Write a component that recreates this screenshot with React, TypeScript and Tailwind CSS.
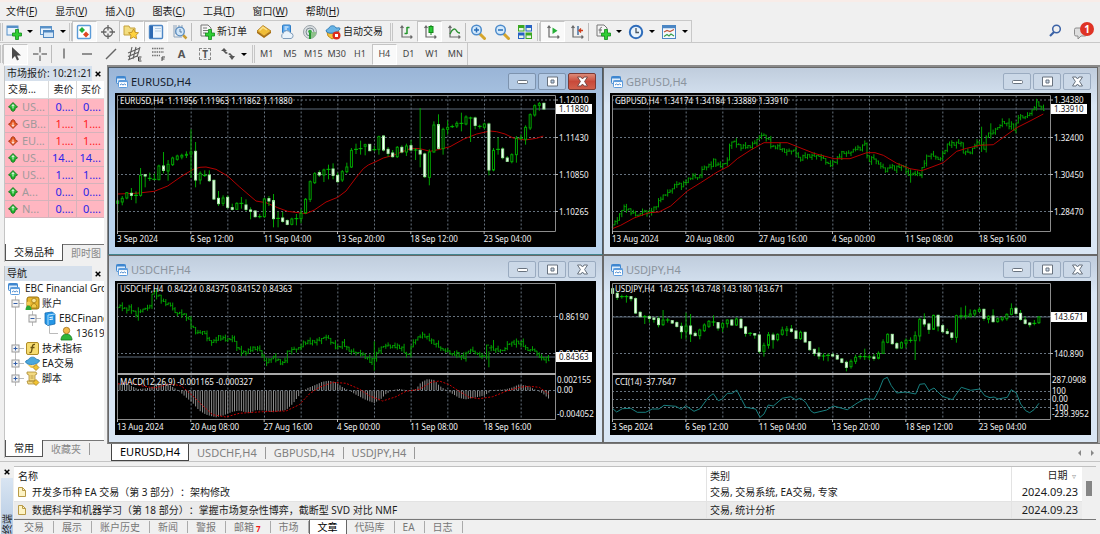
import type { ReactNode } from 'react';

type Point = [number, number];
// [high, open, close, low]
type Candle = [number, number, number, number];

// Chart samples are kept at three units per pixel, measured from the plot origin
const U = 3;
const TOP = 81;
const px = (v: number) => v / U;
const py = (v: number) => (v - TOP) / U;
const round = (v: number) => Math.round(v * 10) / 10;

const eurusdCandles: Candle[] = [
	[400, 412, 405, 440], [390, 408, 397, 418], [378, 396, 380, 400], [366, 382, 388, 402], [376, 388, 388, 412],
	[306, 388, 328, 392], [324, 326, 330, 364], [320, 337, 337, 345], [323, 340, 340, 343], [296, 341, 300, 343],
	[258, 300, 313, 322], [282, 315, 295, 344], [272, 296, 276, 300], [266, 280, 270, 284], [263, 273, 268, 280],
	[256, 268, 265, 276], [190, 264, 258, 336], [228, 256, 342, 364], [316, 342, 322, 355], [313, 328, 328, 333],
	[313, 327, 344, 348], [341, 343, 399, 402], [375, 397, 413, 420], [388, 412, 396, 420], [388, 394, 424, 428],
	[413, 425, 430, 433], [409, 430, 412, 432], [393, 412, 412, 428], [400, 417, 430, 435], [424, 432, 436, 460],
	[433, 435, 452, 455], [444, 452, 452, 457], [395, 452, 399, 455], [390, 398, 405, 420], [384, 404, 458, 484],
	[437, 457, 457, 484], [438, 456, 466, 470], [460, 464, 475, 478], [455, 475, 459, 478], [444, 458, 458, 478],
	[430, 458, 442, 472], [396, 440, 400, 444], [343, 400, 347, 408], [318, 350, 323, 354], [313, 320, 327, 333],
	[308, 327, 312, 348], [296, 310, 310, 340], [292, 309, 328, 340], [320, 328, 347, 350], [312, 342, 317, 348],
	[290, 317, 303, 322], [246, 303, 253, 306], [233, 250, 250, 264], [224, 248, 248, 266], [233, 241, 236, 268],
	[235, 235, 254, 256], [240, 251, 251, 256], [209, 250, 212, 266], [208, 210, 252, 256], [243, 250, 262, 272],
	[252, 261, 272, 275], [240, 272, 244, 276], [238, 244, 258, 262], [233, 258, 240, 270], [222, 239, 252, 256],
	[246, 252, 252, 282], [126, 253, 264, 304], [260, 264, 332, 336], [250, 334, 258, 358], [166, 258, 177, 260],
	[145, 176, 247, 250], [185, 248, 190, 266], [164, 190, 184, 206], [176, 182, 182, 186], [166, 180, 172, 186],
	[140, 172, 172, 196], [148, 174, 153, 178], [152, 156, 156, 228], [152, 156, 178, 190], [176, 181, 181, 188],
	[170, 184, 174, 190], [170, 174, 312, 328], [246, 312, 253, 316], [214, 250, 250, 266], [244, 249, 275, 280],
	[270, 276, 286, 288], [262, 287, 266, 292], [210, 266, 217, 290], [205, 216, 216, 222], [178, 220, 184, 236],
	[142, 186, 146, 192], [115, 147, 119, 152], [108, 118, 113, 134], [110, 112, 129, 131],
];

const usdjpyCandles: Candle[] = [
	[98, 104, 118, 118], [114, 118, 130, 138], [122, 128, 128, 134], [123, 128, 128, 146], [126, 128, 134, 142],
	[130, 134, 177, 180], [172, 175, 188, 190], [183, 188, 188, 210], [183, 188, 193, 206], [190, 192, 196, 206],
	[188, 194, 212, 220], [168, 212, 198, 216], [192, 198, 198, 206], [198, 200, 207, 210], [202, 206, 217, 221],
	[206, 217, 233, 254], [176, 232, 216, 256], [180, 216, 240, 264], [232, 238, 245, 246], [224, 245, 228, 256],
	[208, 230, 213, 234], [198, 217, 202, 222], [184, 204, 204, 216], [204, 206, 222, 230], [204, 220, 209, 234],
	[196, 209, 198, 221], [196, 198, 213, 216], [190, 213, 195, 216], [192, 196, 221, 224], [216, 219, 238, 248],
	[234, 238, 238, 246], [237, 239, 243, 254], [240, 243, 292, 298], [266, 292, 274, 308], [234, 274, 242, 284],
	[236, 243, 257, 284], [238, 257, 241, 262], [218, 241, 228, 245], [216, 230, 225, 246], [213, 225, 232, 236],
	[228, 231, 253, 256], [230, 254, 235, 258], [233, 235, 264, 266], [261, 263, 287, 290], [284, 286, 298, 306],
	[280, 297, 306, 316], [298, 306, 306, 320], [298, 304, 304, 322], [298, 302, 306, 308], [302, 304, 315, 318],
	[312, 315, 325, 328], [320, 325, 340, 352], [316, 338, 322, 344], [302, 322, 310, 330], [300, 308, 308, 316],
	[284, 308, 308, 318], [302, 309, 309, 318], [300, 309, 313, 320], [292, 313, 298, 316], [256, 298, 264, 300],
	[238, 265, 241, 268], [240, 241, 269, 272], [264, 269, 282, 286], [262, 282, 266, 284], [253, 268, 259, 282],
	[250, 259, 259, 266], [232, 260, 245, 318], [192, 246, 196, 262], [178, 197, 210, 218], [206, 210, 226, 240],
	[182, 226, 184, 228], [182, 184, 216, 232], [212, 215, 233, 236], [224, 233, 238, 242], [236, 237, 250, 258],
	[182, 250, 185, 266], [160, 186, 186, 196], [155, 186, 186, 196], [166, 187, 180, 190], [166, 180, 170, 188],
	[160, 172, 166, 175], [164, 166, 193, 200], [184, 196, 187, 208], [166, 186, 203, 206], [190, 203, 194, 206],
	[188, 197, 191, 202], [178, 194, 181, 200], [148, 181, 164, 184], [158, 163, 178, 182], [168, 178, 196, 200],
	[188, 198, 208, 212], [204, 207, 212, 220], [198, 208, 208, 214], [186, 206, 189, 210],
];

const eurusdAverage: Point[] = [
	[8, 384], [63, 382], [118, 376], [158, 360], [201, 330], [235, 310], [255, 304], [273, 303], [303, 310], [338, 330],
	[373, 362], [423, 405], [453, 410], [488, 425], [518, 436], [573, 443], [598, 432], [633, 408], [668, 394], [693, 375],
	[723, 335], [745, 308], [760, 297], [780, 288], [805, 276], [835, 268], [870, 254], [888, 247], [915, 248], [945, 256],
	[975, 250], [1005, 242], [1045, 220], [1085, 204], [1125, 195], [1145, 197], [1170, 204], [1195, 216], [1230, 222],
	[1265, 217], [1285, 210],
];

const gbpusdTrend: Point[] = [
	[7, 485], [17, 470], [32, 455], [44, 428], [60, 430], [77, 440], [92, 450], [107, 437], [117, 440], [132, 432],
	[147, 418], [162, 395], [177, 380], [192, 368], [204, 355], [222, 360], [237, 340], [252, 332], [272, 340], [284, 305],
	[297, 298], [312, 300], [318, 285], [327, 300], [342, 295], [360, 282], [367, 230], [382, 230], [397, 240], [412, 240],
	[424, 247], [437, 235], [447, 220], [457, 203], [469, 210], [482, 225], [492, 245], [507, 238], [522, 250], [532, 262],
	[547, 255], [562, 250], [574, 282], [587, 275], [602, 270], [622, 266], [637, 275], [652, 285], [662, 295], [677, 288],
	[694, 275], [702, 262], [720, 260], [740, 250], [760, 250], [772, 225], [780, 285], [795, 275], [810, 295], [820, 300],
	[835, 312], [848, 300], [860, 312], [875, 300], [888, 298], [900, 330], [920, 325], [938, 322], [948, 290], [960, 270],
	[980, 270], [995, 280], [1010, 255], [1020, 238], [1040, 232], [1058, 225], [1067, 262], [1090, 260], [1098, 235],
	[1110, 228], [1120, 240], [1130, 250], [1140, 195], [1150, 205], [1160, 190], [1175, 182], [1185, 170], [1200, 175],
	[1215, 175], [1220, 195], [1230, 155], [1250, 155], [1265, 140], [1275, 130], [1288, 112], [1300, 128],
];

const gbpusdAverage: Point[] = [
	[7, 488], [32, 478], [72, 456], [117, 440], [147, 438], [182, 420], [232, 375], [272, 350], [322, 318], [357, 300],
	[382, 278], [422, 252], [462, 230], [532, 230], [562, 242], [612, 262], [672, 278], [720, 278], [770, 260], [795, 260],
	[820, 268], [860, 292], [900, 308], [935, 314], [960, 305], [1000, 290], [1040, 256], [1070, 247], [1110, 238],
	[1150, 236], [1180, 214], [1220, 185], [1260, 165], [1300, 144],
];

const usdchfTrend: Point[] = [
	[8, 160], [23, 153], [38, 168], [53, 165], [68, 180], [83, 168], [103, 165], [111, 160], [115, 120], [123, 112],
	[138, 125], [153, 150], [173, 152], [188, 175], [203, 180], [223, 190], [235, 210], [253, 240], [273, 235], [288, 258],
	[303, 262], [318, 252], [333, 255], [361, 252], [373, 285], [388, 295], [403, 290], [418, 285], [443, 288], [453, 315],
	[463, 325], [478, 312], [493, 318], [513, 328], [523, 295], [538, 290], [558, 280], [573, 265], [593, 268], [613, 258],
	[638, 250], [653, 262], [673, 280], [688, 270], [708, 290], [728, 292], [748, 305], [773, 320], [788, 305], [803, 285],
	[823, 272], [848, 278], [868, 285], [885, 305], [898, 270], [913, 255], [933, 240], [945, 250], [963, 270], [983, 282],
	[1003, 290], [1018, 305], [1033, 300], [1053, 308], [1068, 290], [1083, 295], [1098, 300], [1113, 310], [1123, 275],
	[1133, 285], [1148, 285], [1173, 290], [1188, 270], [1213, 262], [1228, 268], [1235, 285], [1248, 290], [1263, 282],
	[1273, 300], [1288, 318], [1301, 315],
];

const macdHistogram: Point[] = [
	[8, 390], [33, 388], [48, 395], [68, 405], [93, 403], [108, 400], [133, 388], [158, 390], [178, 402], [193, 412],
	[213, 430], [233, 447], [253, 470], [273, 482], [303, 490], [323, 485], [353, 473], [373, 470], [403, 478], [423, 468],
	[453, 470], [473, 475], [513, 468], [533, 450], [548, 430], [563, 412], [578, 402], [603, 392], [623, 383], [643, 380],
	[663, 385], [683, 400], [703, 410], [728, 425], [753, 438], [778, 447], [798, 435], [813, 420], [833, 408], [853, 405],
	[883, 410], [903, 405], [918, 385], [938, 375], [958, 378], [973, 395], [993, 408], [1013, 420], [1033, 432],
	[1053, 436], [1083, 430], [1108, 425], [1133, 408], [1163, 407], [1188, 402], [1213, 391], [1238, 396], [1263, 408],
	[1283, 418], [1301, 434],
];

const macdSignal: Point[] = [
	[8, 390], [43, 385], [78, 395], [118, 402], [163, 390], [198, 395], [233, 425], [263, 455], [293, 482], [333, 489],
	[373, 478], [443, 473], [513, 471], [553, 452], [583, 420], [613, 400], [653, 385], [693, 388], [733, 405], [763, 425],
	[803, 441], [843, 428], [873, 412], [913, 406], [948, 385], [973, 381], [1003, 392], [1033, 412], [1063, 430],
	[1093, 434], [1133, 428], [1173, 412], [1213, 400], [1243, 397], [1273, 400], [1301, 420],
];

const cciLine: Point[] = [
	[7, 463], [20, 474], [37, 464], [62, 463], [82, 475], [107, 475], [127, 465], [147, 465], [162, 454], [197, 457],
	[214, 466], [227, 455], [252, 472], [270, 464], [297, 428], [310, 419], [325, 440], [337, 435], [352, 418], [367, 418],
	[380, 408], [407, 460], [437, 465], [450, 490], [462, 480], [475, 453], [490, 456], [517, 433], [542, 428], [557, 437],
	[572, 433], [587, 445], [602, 470], [612, 477], [650, 468], [670, 456], [712, 467], [742, 447], [765, 434], [792, 436],
	[807, 408], [820, 376], [832, 370], [844, 395], [860, 417], [887, 414], [917, 420], [929, 391], [944, 389], [957, 410],
	[972, 402], [997, 427], [1027, 437], [1054, 400], [1082, 409], [1109, 405], [1124, 425], [1140, 431], [1152, 429],
	[1164, 435], [1192, 430], [1204, 407], [1219, 417], [1232, 450], [1247, 470], [1259, 476], [1272, 467], [1287, 448],
];

const septemberDates = ['3 Sep 2024', '6 Sep 12:00', '11 Sep 04:00', '13 Sep 20:00', '18 Sep 12:00', '23 Sep 04:00'];
const augustDates = ['13 Aug 2024', '20 Aug 08:00', '27 Aug 16:00', '4 Sep 00:00', '11 Sep 08:00', '18 Sep 16:00'];

function valueAt(points: Point[], x: number) {
	const i = points.findIndex((p) => p[0] >= x);
	if (i <= 0) return points[i === 0 ? 0 : points.length - 1][1];
	const [x0, y0] = points[i - 1];
	const [x1, y1] = points[i];
	return y0 + ((y1 - y0) * (x - x0)) / (x1 - x0);
}

const linePath = (points: Point[]) => points.map(([x, y], i) => `${i ? 'L' : 'M'}${round(px(x))} ${round(py(y))}`).join('');

function barPath(points: Point[], spikes: Record<number, Point>) {
	const price = (k: number) => valueAt(points, 8 + k * 6.875) + 4 * Math.sin(k * 2.9) + 3 * Math.sin(k * 0.8);
	let d = '';
	for (let k = 0; k < 189; k++) {
		const x = px(8 + k * 6.875);
		const open = price(k);
		const close = price(k + 1);
		let high = Math.min(open, close) - 9 * Math.sin(k * 2.3) ** 4 - 1;
		let low = Math.max(open, close) + 9 * Math.sin(k * 1.7 + 1) ** 4 + 1;
		if (spikes[k]) [high, low] = spikes[k];
		d += `M${round(x)} ${round(py(high))}V${round(py(low))}`;
		d += `M${round(x - 1)} ${round(py(open))}h1M${round(x)} ${round(py(close))}h1`;
	}
	return d;
}

function Candles({ data }: { data: Candle[] }) {
	return (
		<g stroke="#00c400" strokeWidth="1">
			{data.map(([high, open, close, low], k) => {
				const x = px(8 + k * 13.75);
				const bear = close > open;
				const top = py(Math.min(open, close));
				const height = Math.abs(close - open) / U;
				return (
					<g key={k}>
						<path d={`M${x} ${py(high)}V${py(low)}`} stroke="#00a400" />
						{height < 1 ? (
							<path d={`M${x - 2} ${top}h4`} />
						) : (
							<rect
								x={x - 1}
								y={top}
								width="2"
								height={height}
								fill={bear ? '#fff' : '#000'}
								stroke={bear ? '#a4eca4' : '#00a400'}
							/>
						)}
					</g>
				);
			})}
		</g>
	);
}

type ChartProps = {
	label: string;
	summary: string;
	dates: string[];
	rows: { y: number; text: string }[];
	priceY: number;
	price: string;
	indicator?: { text: string; levels: number[]; scale: { y: number; text: string }[] };
	children: ReactNode;
};

function Chart({ label, summary, dates, rows, priceY, price, indicator, children }: ChartProps) {
	return (
		<svg viewBox="0 0 481 154" className="block w-full bg-black font-['Noto_Sans','Open_Sans',sans-serif] text-[8px]" role="img" aria-label={label}>
			<g stroke="#66727e" strokeDasharray="2 2" strokeWidth="1">
				{Array.from({ length: 11 }, (_, i) => (
					<path key={i} d={`M${39.5 + (i * 110) / 3} 2.5V138`} />
				))}
				{rows.map((row) => (
					<path key={row.y} d={`M2 ${row.y}H440`} />
				))}
				{indicator?.levels.map((y) => <path key={y} d={`M2 ${y}H440`} />)}
			</g>
			<path d={`M2 ${priceY}H440`} stroke="#5c6b7a" />
			{children}
			<path d="M2.5 138.5V2.5H440.5V138.5Z" fill="none" stroke="#8c8c8c" />
			{indicator && <path d="M2 93H441" stroke="#a8a8a8" strokeWidth="2" />}
			<path d={dates.map((_, i) => `M${2.5 + (i * 220) / 3} 138v3`).join('')} stroke="#b4b4b4" />
			<path d={rows.map((row) => `M440 ${row.y}h3`).join('')} stroke="#b4b4b4" />
			<g fill="#f2f2f2">
				<text x="5" y="11" className="whitespace-pre">{summary}</text>
				{indicator && <text x="5" y="104">{indicator.text}</text>}
				{dates.map((date, i) => (
					<text key={date} x={2 + (i * 220) / 3} y="149">{date}</text>
				))}
				{rows.map((row) => (
					<text key={row.y} x="444" y={row.y + 3}>{row.text}</text>
				))}
				{indicator?.scale.map((row) => (
					<text key={row.text} x="442" y={row.y + 3}>{row.text}</text>
				))}
			</g>
			<rect x="441" y={priceY - 5} width="36" height="10" fill="#fff" />
			<text x="444" y={priceY + 3} fill="#111">{price}</text>
		</svg>
	);
}

function ChartIcon() {
	return (
		<svg viewBox="0 0 14 14" className="size-3.5 shrink-0">
			<rect x="1.5" y="1.5" width="9" height="7" rx="1" fill="#dcecfb" stroke="#3f86cf" />
			<path d="M1.5 2.5h9" stroke="#3f86cf" strokeWidth="2" />
			<rect x="3.5" y="5.5" width="9" height="7" rx="1" fill="#fff" stroke="#5b9bdc" />
			<path d="M3.5 6.3h9" stroke="#5b9bdc" strokeWidth="1.6" />
			<path d="M5 10l1.5-1 1.5 1 1.5-1 1.5 1" fill="none" stroke="#4a8ad0" />
		</svg>
	);
}

const glyphs: Record<string, ReactNode> = {
	Minimize: <rect x="1.5" y="5.5" width="10" height="3" rx="1" />,
	Maximize: <path d="M1.5 2h10v9h-10zM5 5h3v3H5z" fillRule="evenodd" />,
	Close: <path d="M1.5 2h3.500l1.500 2L8 2h3.500L8.600 6.500l2.900 4.500H8L6.500 9 5 11H1.500l2.900-4.500z" />,
};

function ChartWindow({ title, active = false, children }: { title: string; active?: boolean; children: ReactNode }) {
	return (
		<section
			className={`min-w-0 border px-1.5 pb-[7px] ${
				active
					? 'border-[#4c5862] border-b-[#43858f] bg-linear-to-b from-[#9ab5d7] to-[#b9d3ed] to-40%'
					: 'border-[#686868] bg-linear-to-b from-[#c0cddd] to-[#d9e6f4] to-20%'
			}`}
		>
			<header className="flex h-[25px] items-center gap-0.5 pt-0.5">
				<ChartIcon />
				<h2 className={`flex-1 text-[11px] leading-4 ${active ? 'text-[#15202c]' : 'text-[#8b949e]'}`}>{title}</h2>
				<div className="flex gap-0.5">
					{Object.keys(glyphs).map((name) => {
						const red = active && name === 'Close';
						return (
							<button
								key={name}
								type="button"
								aria-label={name}
								className={`flex h-[17px] w-7 items-center justify-center rounded-xs border ${
									red
										? 'border-[#7c3a35] bg-linear-to-b from-[#dd8a78] via-[#c8493a] to-[#d0604c]'
										: active
											? 'border-[#7d93ae] bg-[#b4cae4]'
											: 'border-[#9aabc0] bg-[#cbd8e7]'
								}`}
							>
								<svg viewBox="0 0 13 13" className="size-[13px]" fill="#fff" stroke={red ? '#7a4844' : '#68727e'}>
									{glyphs[name]}
								</svg>
							</button>
						);
					})}
				</div>
			</header>
			{children}
		</section>
	);
}

const plus = <path d="M9.500 5.500h3v3.500h3v3h-3v3.500h-3V12h-3V9h3z" fill="#2fce34" stroke="#128a1b" strokeWidth=".8" />;
const axes = <path d="M4 2v11h10M2.500 4L4 2l1.500 2M12.500 11.500L14 13l-1.500 1.500" fill="none" stroke="#686868" strokeWidth="1.200" />;
const lens = (
	<>
		<path d="M10 10l4.500 4.500" stroke="#d5a52c" strokeWidth="3" strokeLinecap="round" />
		<circle cx="6.500" cy="6" r="4.800" fill="#d4eafc" stroke="#4d8bcb" strokeWidth="1.500" />
	</>
);

const icons: Record<string, ReactNode> = {
	newChart: (
		<>
			<rect x="1" y="2" width="11" height="9" fill="#e9f3fc" stroke="#5790c8" />
			<path d="M1 3h11" stroke="#5790c8" strokeWidth="2" />
			{plus}
		</>
	),
	profiles: (
		<>
			<rect x="1.500" y="2.500" width="11" height="8" fill="#eaf4fd" stroke="#5a92c8" />
			<path d="M1 3.500h12" stroke="#5a92c8" strokeWidth="2" />
			<rect x="4.500" y="6.500" width="10" height="7" fill="#d5e8f9" stroke="#4f87c0" />
			<path d="M4.500 7.500h10" stroke="#4f87c0" strokeWidth="2" />
		</>
	),
	marketWatch: (
		<>
			<rect x="1.500" y="1.500" width="13" height="13" rx="1" fill="#fff" stroke="#5b9bd8" strokeWidth="1.400" />
			<path d="M6 3l3 3-3 3-3-3z" fill="#21ad39" />
			<path d="M10 7.500l3 3-3 3-3-3z" fill="#e04821" />
		</>
	),
	target: (
		<>
			<circle cx="8" cy="8" r="4.500" fill="none" stroke="#656565" strokeWidth="1.300" />
			<path d="M8 1v5.500M8 9.500V15M1 8h5.500M9.500 8H15" stroke="#656565" strokeWidth="1.300" />
		</>
	),
	favorites: (
		<>
			<path d="M1 2h5l1 2h5v7H1z" fill="#f3dd7f" stroke="#c4a13c" />
			<path d="M10.500 5l1.600 3.300 3.400.5-2.500 2.400.6 3.500-3.100-1.700-3.100 1.700.6-3.500-2.500-2.400 3.400-.5z" fill="#ffd23e" stroke="#b8861c" strokeWidth=".8" />
		</>
	),
	terminal: (
		<>
			<rect x="1.500" y="1.500" width="13" height="13" rx="1" fill="#edf5fd" stroke="#4d86c5" strokeWidth="1.400" />
			<path d="M3.500 2v12" stroke="#2d69b2" strokeWidth="3" />
			<path d="M7 4.500h6M7 7h6" stroke="#b3cbe3" />
		</>
	),
	tester: (
		<>
			<path d="M2 1v12h8M4 1v9M10 1v4M7 1v3" fill="none" stroke="#8ba2ba" />
			<path d="M11 11l3.500 3.500" stroke="#c99d35" strokeWidth="2.500" />
			<circle cx="8" cy="7.500" r="4.300" fill="#cfe5f8" stroke="#5a8cbf" strokeWidth="1.300" />
			<path d="M8 5v3h2" fill="none" stroke="#5a7ca0" />
		</>
	),
	newOrder: (
		<>
			<path d="M2 1h7l3 3v8H2z" fill="#f5f5f5" stroke="#777" />
			<path d="M4 4h4M4 6.500h5M4 9h3" stroke="#777" />
			{plus}
		</>
	),
	book: (
		<>
			<path d="M1 9l7 5 7-5v-2L8 12 1 7z" fill="#a86f12" />
			<path d="M1 7l6-5.500L15 7l-7 5z" fill="#f0bd38" stroke="#a8741a" strokeWidth=".8" />
			<path d="M3.500 6.500L7 3.300l4 2.700" fill="none" stroke="#fbe18c" strokeWidth="1.500" />
		</>
	),
	cloud: (
		<>
			<rect x="3.500" y="1" width="8" height="8" rx="1" fill="#58a6ec" stroke="#2f7cc4" />
			<path d="M5.500 3h4M5.500 5h2.500" stroke="#fff" strokeWidth="1.200" />
			<path d="M4 14.500a3 3 0 010-5 4 4 0 017.500-.5A2.800 2.800 0 0112 14.500z" fill="#eaf3fb" stroke="#7f9cb9" />
		</>
	),
	signal: (
		<>
			<circle cx="8" cy="8" r="6.500" fill="#dadfe2" stroke="#9aa3a8" />
			<circle cx="8" cy="8" r="4" fill="none" stroke="#7d8a92" />
			<path d="M8 8h6.500A6.500 6.500 0 018 14.500z" fill="#8fc08b" />
			<path d="M8 8v7" stroke="#239530" strokeWidth="2" />
			<circle cx="8" cy="7.500" r="1.800" fill="#35a942" />
		</>
	),
	autoTrade: (
		<>
			<path d="M2 8c4 2 8 2 12-1l-2 5-5 3-4-3z" fill="#f4c33d" stroke="#c18c1d" />
			<path d="M1 7c0-2 3-2 3-3 1-3 6-3 7 0 2 0 4-1 4 1-2 4-12 6-14 2z" fill="#68b4e5" stroke="#347fb8" />
			<circle cx="11.500" cy="11.500" r="4" fill="#dd2c1c" />
			<rect x="10" y="10" width="3" height="3" fill="#fff" />
		</>
	),
	bars: (
		<>
			{axes}
			<path d="M9 3v7M9 3.500h2.500M6.500 9.500H9" stroke="#22952a" strokeWidth="1.500" />
		</>
	),
	candle: (
		<>
			{axes}
			<path d="M9 1v10" stroke="#14871b" />
			<rect x="7" y="2.500" width="4" height="6" fill="#28ca35" stroke="#14871b" />
		</>
	),
	line: (
		<>
			{axes}
			<path d="M4 10c2-5 5-6 6-4s2 3 4 3" fill="none" stroke="#2f9136" strokeWidth="1.400" />
		</>
	),
	zoomIn: (
		<>
			{lens}
			<path d="M4 6h5M6.500 3.500v5" stroke="#276cb6" strokeWidth="1.500" />
		</>
	),
	zoomOut: (
		<>
			{lens}
			<path d="M4 6h5" stroke="#276cb6" strokeWidth="1.500" />
		</>
	),
	tile: (
		<>
			<path d="M8.500 1H15v6.500H8.500zM1 8.500h6.500V15H1z" fill="#2561c3" />
			<path d="M1 1h6.500v6.500H1zM8.500 8.500H15V15H8.500z" fill="#3ba822" />
			<path d="M2 4h4.500v2.500H2zM9.500 4H14v2.500H9.500zM2 11.500h4.500V14H2zM9.500 11.500H14V14H9.500z" fill="#eaf5e6" />
		</>
	),
	scroll: (
		<>
			{axes}
			<path d="M7.500 3.500v6.500l5-3.200z" fill="#24ae35" />
		</>
	),
	shift: (
		<>
			{axes}
			<path d="M9 2v9" stroke="#3c6b9d" strokeWidth="1.400" />
			<path d="M14 6.500h-4M12 4.500l-2 2 2 2" fill="none" stroke="#cf3d1b" strokeWidth="1.300" />
		</>
	),
	indicator: (
		<>
			<path d="M2 1h7l3 3v8H2z" fill="#f5f5f5" stroke="#777" />
			<path d="M7 3.500c-2-.5-2 1-2 6M3.500 6H7" fill="none" stroke="#666" />
			{plus}
		</>
	),
	clock: (
		<>
			<circle cx="8" cy="8" r="6.200" fill="#e9f4fd" stroke="#2f6dbb" strokeWidth="2" />
			<path d="M8 4v4.500h3" fill="none" stroke="#4c5863" strokeWidth="1.300" />
		</>
	),
	template: (
		<>
			<rect x="1.500" y="1.500" width="13" height="13" fill="#f4f9fe" stroke="#4b86c4" />
			<path d="M1.500 3h13" stroke="#4b86c4" strokeWidth="2.500" />
			<path d="M3 8l3-1.500 3 1 4-2" fill="none" stroke="#c0553a" strokeWidth="1.200" />
			<path d="M3 12.500l3-2 2 1.500 2-2 3 2" fill="none" stroke="#399d4a" strokeWidth="1.200" />
		</>
	),
	cursor: <path d="M4 1v12l3-3 2 4.500 2-1L9 9.500h4z" fill="#4b4b4b" />,
	cross: <path d="M8 1v5.500M8 9.500V15M1 8h5.500M9.500 8H15" stroke="#777" strokeWidth="1.400" />,
	vline: <path d="M8 2.500v10" stroke="#666" strokeWidth="1.400" />,
	hline: <path d="M3 8h10" stroke="#666" strokeWidth="1.400" />,
	trend: <path d="M3 13L13 3" stroke="#666" strokeWidth="1.400" />,
	channel: (
		<>
			<path d="M1 7l12-5M1 10.500L12 6M1 14l9-4M5 1L2 14M9 1L6 13M13 1l-3 10" stroke="#606060" strokeWidth="1.100" />
			<path d="M14.500 11h-3v4h3M11.500 13H14" fill="none" stroke="#444" />
		</>
	),
	fibo: (
		<>
			<path d="M2 2.500h12M2 6h12M2 9.500h8" stroke="#707070" strokeDasharray="1.500 .8" strokeWidth="1.300" />
			<path d="M12 15v-4h3M12 13h2.500" fill="none" stroke="#444" />
		</>
	),
	arrows: (
		<>
			<path d="M1 5l3-3 3 3H5l3 2-2 1-3-3z" fill="#555" />
			<path d="M15 10l-3 4-3-4h2L8 8l2-1 3 3z" fill="#555" />
		</>
	),
};

function Icon({ name }: { name: string }) {
	return (
		<svg viewBox="0 0 16 16" className="size-4 shrink-0" aria-hidden="true">
			{icons[name]}
		</svg>
	);
}

function ToolButton({ name, pressed = false, children }: { name: string; pressed?: boolean; children?: ReactNode }) {
	return (
		<button
			type="button"
			aria-label={name}
			className={`flex h-[21px] flex-1 items-center justify-center text-[10px] ${
				pressed ? 'border border-[#c4c4c4] border-r-white border-b-white bg-[#f9f9f9]' : ''
			}`}
		>
			{children ?? <Icon name={name} />}
		</button>
	);
}

function MenuButton({ name }: { name: string }) {
	return (
		<button type="button" aria-label={name} className="flex h-[21px] w-[33px] items-center gap-1 pl-[3px]">
			<Icon name={name} />
			<span className="ml-px border-x-3 border-t-3 border-x-transparent border-t-black" />
		</button>
	);
}

function TextButton({ name, text, className }: { name: string; text: string; className: string }) {
	return (
		<button type="button" className={`flex h-[21px] items-center gap-0.5 pl-[3px] text-[10px] whitespace-nowrap ${className}`}>
			<Icon name={name} />
			{text}
		</button>
	);
}

const Grip = () => <span className="h-[18px] w-[3px] shrink-0 border-x border-[#c6c6c6]" />;
const Divider = () => <span className="h-[18px] w-px shrink-0 bg-[#bcbcbc]" />;

const menus = [
	['文件', 'F'], ['显示', 'V'], ['插入', 'I'], ['图表', 'C'], ['工具', 'T'], ['窗口', 'W'], ['帮助', 'H'],
];

function Toolbars() {
	return (
		<header>
			<nav className="flex h-5 items-center gap-[18px] border-t-2 border-[#f8ece8] px-1.5 text-[10px]">
				{menus.map(([text, key]) => (
					<button key={key} type="button" className="whitespace-nowrap">
						{text}(<u>{key}</u>)
					</button>
				))}
			</nav>
			<div className="flex h-[23px] items-center justify-between border-b border-[#c8c8c8]">
				<div className="flex h-full items-center border-t border-r border-[#c8c8c8]">
					<Grip />
					<MenuButton name="newChart" />
					<MenuButton name="profiles" />
					<Grip />
					<div className="flex w-[119px]">
						<ToolButton name="marketWatch" pressed />
						<ToolButton name="target" />
						<ToolButton name="favorites" pressed />
						<ToolButton name="terminal" pressed />
						<ToolButton name="tester" />
					</div>
					<Divider />
					<TextButton name="newOrder" text="新订单" className="ml-1 w-14" />
					<div className="flex w-[70px]">
						<ToolButton name="book" />
						<ToolButton name="cloud" />
						<ToolButton name="signal" />
					</div>
					<TextButton name="autoTrade" text="自动交易" className="w-[68px]" />
					<Grip />
					<div className="ml-px flex w-[71px]">
						<ToolButton name="bars" />
						<ToolButton name="candle" pressed />
						<ToolButton name="line" />
					</div>
					<Divider />
					<div className="flex w-[71px]">
						<ToolButton name="zoomIn" />
						<ToolButton name="zoomOut" />
						<ToolButton name="tile" />
					</div>
					<Grip />
					<div className="flex w-12">
						<ToolButton name="scroll" pressed />
						<ToolButton name="shift" />
					</div>
					<Divider />
					<span className="w-[3px]" />
					<MenuButton name="indicator" />
					<MenuButton name="clock" />
					<MenuButton name="template" />
				</div>
				<div className="flex items-center gap-3 pr-1.5">
					<button type="button" aria-label="Search">
						<svg viewBox="0 0 14 14" className="size-3.5" fill="none" stroke="#3b62a6">
							<circle cx="8.500" cy="5" r="3.800" strokeWidth="1.500" />
							<path d="M6 8l-4 4" strokeWidth="2.200" />
						</svg>
					</button>
					<button type="button" aria-label="Notifications" className="relative flex h-[18px] w-5 items-end">
						<svg viewBox="0 0 14 14" className="size-3.5">
							<path d="M2 2h9a1.500 1.500 0 011.500 1.500v5A1.500 1.500 0 0111 10H7l-3 3v-3H2A1.500 1.500 0 01.5 8.500v-5A1.500 1.500 0 012 2z" fill="#dedede" stroke="#8c8c8c" />
						</svg>
						<span className="absolute top-0 right-0 flex size-3.5 items-center justify-center rounded-full bg-[#df3325] text-[10px] font-bold text-white">1</span>
					</button>
				</div>
			</div>
			<div className="flex h-[22px] items-center">
				<div className="flex h-full items-center border-r border-[#c8c8c8] text-[#444]">
					<Grip />
					<div className="flex w-12">
						<ToolButton name="cursor" pressed />
						<ToolButton name="cross" />
					</div>
					<Divider />
					<div className="flex w-[165px]">
						<ToolButton name="vline" />
						<ToolButton name="hline" />
						<ToolButton name="trend" />
						<ToolButton name="channel" />
						<ToolButton name="fibo" />
						<ToolButton name="Text">
							<span className="text-[11px] font-bold text-[#555]">A</span>
						</ToolButton>
						<ToolButton name="Text label">
							<span className="border border-dashed border-[#888] px-0.5 text-[10px] leading-[10px] font-bold text-[#555]">T</span>
						</ToolButton>
					</div>
					<MenuButton name="arrows" />
					<span className="w-0.5" />
					<Grip />
					<div className="flex w-[212px]">
						{['M1', 'M5', 'M15', 'M30', 'H1', 'H4', 'D1', 'W1', 'MN'].map((frame) => (
							<ToolButton key={frame} name={frame} pressed={frame === 'H4'}>
								<span className="flex w-0 justify-center text-[9px]">{frame}</span>
							</ToolButton>
						))}
					</div>
				</div>
			</div>
		</header>
	);
}

const quotes = [
	{ symbol: 'US...', price: '0....', up: true, color: 'text-[#2b25e8]' },
	{ symbol: 'GB...', price: '1....', up: false, color: 'text-[#ff1c1c]' },
	{ symbol: 'EU...', price: '1....', up: false, color: 'text-[#ff1c1c]' },
	{ symbol: 'US...', price: '14...', up: true, color: 'text-[#2b25e8]' },
	{ symbol: 'US...', price: '1....', up: true, color: 'text-[#2b25e8]' },
	{ symbol: 'A...', price: '0....', up: true, color: 'text-[#2b25e8]' },
	{ symbol: 'N...', price: '0....', up: true, color: 'text-[#2b25e8]' },
];

function QuoteArrow({ up }: { up: boolean }) {
	return (
		<svg viewBox="0 0 10 10" className={`size-2.5 shrink-0 ${up ? '' : 'rotate-180'}`}>
			<path d="M5 .5L9.500 5 7 6.500V8L5 9.500 3 8V6.500L.5 5z" fill={up ? '#22b52e' : '#ea5a22'} stroke={up ? '#0c6f1c' : '#9b2f10'} strokeWidth=".8" />
			<path d="M5 2.500v4M3.500 4.200L5 2.700l1.500 1.500" fill="none" stroke="#fff" strokeWidth=".9" />
		</svg>
	);
}

function PanelTitle({ children }: { children: ReactNode }) {
	return (
		<div className="flex h-[15px] shrink-0 items-center bg-[#d6e0ec] text-[10px] whitespace-nowrap">
			<h2 className="flex-1 pl-0.5">{children}</h2>
			<button type="button" aria-label="Close" className="flex h-full w-3 items-center justify-center bg-[#f0f0f0]">
				<svg viewBox="0 0 6 6" className="size-1.5"><path d="M.7.7l4.600 4.600M5.300.7L.7 5.300" stroke="#000" strokeWidth="1.500" /></svg>
			</button>
		</div>
	);
}

function PanelTabs({ tabs }: { tabs: string[] }) {
	return (
		<div className="flex h-[18px] shrink-0 overflow-hidden pb-px text-[10px] whitespace-nowrap">
			<button type="button" className="border border-t-0 border-[#555] bg-white px-2">{tabs[0]}</button>
			<div className="flex flex-1 items-center border-t border-[#777]">
				<button type="button" className="border-r border-[#999] px-2 leading-3 text-[#888]">{tabs[1]}</button>
			</div>
		</div>
	);
}

function MarketWatch() {
	return (
		<section className="flex h-[196px] flex-col border-l border-[#c4c4c4]">
			<PanelTitle>市场报价: 10:21:21</PanelTitle>
			<div className="flex-1 bg-white">
				<table className="w-full table-fixed border-collapse">
					<colgroup>
						<col className="w-[43px]" />
						<col className="w-[28px]" />
						<col />
					</colgroup>
					<thead className="text-[10px]">
						<tr className="h-[17px] border-b border-[#d9d9d9]">
							<th className="border-r border-[#d9d9d9] p-0 pl-[3px] text-left font-normal">交易...</th>
							<th className="border-r border-[#d9d9d9] p-0 pr-0.5 text-right font-normal">卖价</th>
							<th className="p-0 pr-[3px] text-right font-normal">买价</th>
						</tr>
					</thead>
					<tbody className="bg-[#ffb6c1] text-[11px] leading-4">
						{quotes.map((quote, i) => (
							<tr key={i} className="h-[17px] border-b border-[#d5b3bb]">
								<td className="border-r border-[#d5b3bb] p-0">
									<span className="flex items-center gap-1 pl-[3px] text-[#a09a9c]">
										<QuoteArrow up={quote.up} />
										{quote.symbol}
									</span>
								</td>
								<td className={`border-r border-[#d5b3bb] p-0 pr-0.5 text-right ${quote.color}`}>{quote.price}</td>
								<td className={`p-0 pr-[3px] text-right ${quote.color}`}>{quote.price}</td>
							</tr>
						))}
					</tbody>
				</table>
			</div>
			<PanelTabs tabs={['交易品种', '即时图']} />
		</section>
	);
}

const cells: Record<string, ReactNode> = {
	line: <path d="M8.500 0v15" stroke="#bbb" />,
	blank: null,
	elbow: <path d="M8.500 0v7.500H17" fill="none" stroke="#bbb" />,
	minus: (
		<>
			<path d="M8.500 0v15M8 7.500h9" stroke="#bbb" />
			<rect x="5" y="4" width="7" height="7" fill="#f4f4f4" stroke="#999" />
			<path d="M6.500 7.500h4" stroke="#345fa8" />
		</>
	),
	plus: (
		<>
			<path d="M8.500 0v15M8 7.500h9" stroke="#bbb" />
			<rect x="5" y="4" width="7" height="7" fill="#f4f4f4" stroke="#999" />
			<path d="M6.500 7.500h4M8.500 5.500v4" stroke="#345fa8" />
		</>
	),
	accounts: (
		<>
			<rect x="3" y="1" width="12" height="12" rx="2" fill="#e6b52d" stroke="#97700d" />
			<circle cx="10" cy="4.500" r="2.300" fill="#f9e48f" stroke="#97700d" strokeWidth=".7" />
			<path d="M7 12c0-6 6-6 6 0z" fill="#f2cb4a" stroke="#97700d" strokeWidth=".7" />
			<circle cx="4.500" cy="7.500" r="2" fill="#f3cb55" />
			<path d="M1.500 14c0-6 6-6 6 0z" fill="#2ba636" />
		</>
	),
	server: (
		<>
			<path d="M4 2l7-1 3 2v10l-7 1.500-3-2z" fill="#2596e6" stroke="#1769ae" strokeWidth=".8" />
			<path d="M7 4l7-1M7 4v10" stroke="#aee0ff" />
			<path d="M8.500 6.500l3.500-.5M8.500 8.500l3.500-.5" stroke="#fff" />
		</>
	),
	user: (
		<>
			<path d="M3 14c0-8 11-8 11 0z" fill="#2eb53a" stroke="#16761f" strokeWidth=".8" />
			<circle cx="8.500" cy="4.500" r="3.200" fill="#f3b94a" stroke="#9f6c17" strokeWidth=".8" />
		</>
	),
	function: (
		<>
			<rect x="2.500" y="1.500" width="12" height="12" rx="1.500" fill="#f6dc70" stroke="#b08c26" />
			<path d="M11 3.500c-3-.5-2.500 2-3 4.500s-.5 4-2.500 3.500M6.500 6.500h4" fill="none" stroke="#6b5310" strokeWidth="1.300" />
		</>
	),
	expert: (
		<>
			<path d="M3 8c4 2 8 2 11-1l-2 4-5 1z" fill="#f2c64b" />
			<path d="M1.500 6c0-2 3-1.500 3.500-3 1-2.500 6-2.500 7 0 1 1 3.500 0 3.500 2-2 4-12 5-14 1z" fill="#4ba7dd" stroke="#2878b0" strokeWidth=".8" />
			<path d="M12 8.500l3 3-3 3-3-3z" fill="#f1c333" stroke="#a9801b" strokeWidth=".8" />
		</>
	),
	script: (
		<>
			<path d="M3 1h9l1 2-2 1v6H5V4L3 3zM3 10h8v3H4z" fill="#f3da81" stroke="#ab8a33" strokeWidth=".8" />
			<path d="M6.500 5h3M6.500 7h3" stroke="#ab8a33" strokeWidth=".8" />
			<path d="M12 8.500l3 3-3 3-3-3z" fill="#f1c333" stroke="#a9801b" strokeWidth=".8" />
		</>
	),
};

const tree = [
	{ text: '账户', cells: ['minus', 'accounts'] },
	{ text: 'EBCFinancial', cells: ['line', 'minus', 'server'] },
	{ text: '13619', cells: ['line', 'blank', 'elbow', 'user'] },
	{ text: '技术指标', cells: ['plus', 'function'] },
	{ text: 'EA交易', cells: ['plus', 'expert'] },
	{ text: '脚本', cells: ['plus', 'script'] },
];

function Navigator() {
	return (
		<section className="mt-1 flex flex-1 flex-col border-l border-[#c4c4c4]">
			<PanelTitle>导航</PanelTitle>
			<ul className="flex-1 overflow-hidden bg-white pl-0.5 text-[10px] leading-[15px] whitespace-nowrap">
				<li className="flex h-[15px] items-center gap-1">
					<ChartIcon />
					EBC Financial Group
				</li>
				{tree.map((node) => (
					<li key={node.text} className="flex h-[15px] items-center">
						{node.cells.map((cell, i) => (
							<svg key={i} viewBox="0 0 17 15" className="h-[15px] w-[17px] shrink-0">{cells[cell]}</svg>
						))}
						<span className="pl-px">{node.text}</span>
					</li>
				))}
			</ul>
			<PanelTabs tabs={['常用', '收藏夹']} />
		</section>
	);
}

const articles = [
	{ title: '开发多币种 EA 交易（第 3 部分）：架构修改', category: '交易, 交易系统, EA交易, 专家', date: '2024.09.23' },
	{ title: '数据科学和机器学习（第 18 部分）：掌握市场复杂性博弈，截断型 SVD 对比 NMF', category: '交易, 统计分析', date: '2024.09.23' },
];

function Terminal() {
	return (
		<section className="mt-1 flex flex-1 overflow-hidden">
			<div className="flex w-3.5 shrink-0 flex-col items-center">
				<button type="button" aria-label="Close" className="flex h-3 items-center">
					<svg viewBox="0 0 6 6" className="size-1.5"><path d="M.7.7l4.600 4.600M5.300.7L.7 5.300" stroke="#000" strokeWidth="1.500" /></svg>
				</button>
				<div className="flex w-3 flex-1 items-end justify-center bg-linear-to-b from-[#d9e5f2] to-[#b3c9e2] text-[10px] leading-3">
					<span className="rotate-180 [text-orientation:sideways] [writing-mode:vertical-rl]">终端</span>
				</div>
			</div>
			<div className="flex min-w-0 flex-1 flex-col pr-1">
				<div className="flex border-t border-b border-t-[#c0c0c0] border-b-[#777]">
					<table className="flex-1 table-fixed border-collapse bg-white text-[10px] leading-4 [text-spacing-trim:space-all]">
						<thead>
							<tr className="h-[17px]">
								<th className="w-full border-r border-[#e3e3e3] p-0 pl-1 text-left font-normal">名称</th>
								<th className="border-r border-[#e3e3e3] p-0 pl-[3px] text-left font-normal">类别</th>
								<th className="p-0 pr-1.5 text-right font-normal">日期 <span className="pl-0.5 text-[8px] text-[#999]">▿</span></th>
							</tr>
						</thead>
						<tbody>
							{articles.map((article) => (
								<tr key={article.title} className="h-[17px] border-b border-[#e3e3e3] last:bg-[#ebebeb]">
									<td className="border-r border-[#e3e3e3] p-0 pl-1">
										<a href="#" className="flex items-center gap-1.5 whitespace-nowrap">
											<svg viewBox="0 0 8 10" className="h-2.5 w-2">
												<path d="M.5.5h4l3 3v6h-7z" fill="#fdf3c4" stroke="#b99b48" />
												<path d="M4.500.5v3h3" fill="none" stroke="#b99b48" />
											</svg>
											{article.title}
										</a>
									</td>
									<td className="border-r border-[#e3e3e3] p-0 pl-[3px]"><div className="w-[301px]">{article.category}</div></td>
									<td className="p-0 pr-1 text-right text-[11px]"><div className="w-[66px]">{article.date}</div></td>
								</tr>
							))}
						</tbody>
					</table>
					<div className="flex w-3.5 justify-center pt-3.5">
						<span className="h-[15px] w-1.5 bg-[#858585]" />
					</div>
				</div>
				<div className="flex h-3.5 items-center text-[10px] whitespace-nowrap text-[#777]">
					{['交易', '展示', '账户历史', '新闻', '警报', '邮箱', '市场', '文章', '代码库', 'EA', '日志'].map((tab) =>
						tab === '文章' ? (
							<button key={tab} type="button" className="h-full border-x border-[#666] bg-white px-2 leading-3 text-black">{tab}</button>
						) : (
							<button key={tab} type="button" className="flex items-end border-r border-[#aaa] pr-[9px] pl-2 leading-3 first:pl-2.5">
								{tab}
								{tab === '邮箱' && <span className="pl-0.5 text-[8px] leading-2 font-bold text-[#f01818]">7</span>}
							</button>
						),
					)}
				</div>
			</div>
		</section>
	);
}

function Workspace() {
	return (
		<main className="flex min-w-0 flex-1 flex-col">
			<div className="border-t-2 border-b border-l border-[#8a8a8a] border-b-[#777] bg-[#ababab] pr-0.5">
				<div className="grid grid-cols-2">
					<ChartWindow title="EURUSD,H4" active>
						<Chart
							label="EURUSD,H4"
							summary="EURUSD,H4  1.11956 1.11963 1.11862 1.11880"
							dates={septemberDates}
							rows={[{ y: 7, text: '1.12010' }, { y: 44.5, text: '1.11430' }, { y: 81.5, text: '1.10850' }, { y: 118.5, text: '1.10265' }]}
							priceY={16}
							price="1.11880"
						>
							<path d={linePath(eurusdAverage)} fill="none" stroke="#b40000" />
							<Candles data={eurusdCandles} />
						</Chart>
					</ChartWindow>
					<ChartWindow title="GBPUSD,H4">
						<Chart
							label="GBPUSD,H4"
							summary="GBPUSD,H4  1.34174 1.34184 1.33889 1.33910"
							dates={augustDates}
							rows={[{ y: 7, text: '1.34380' }, { y: 44.5, text: '1.32400' }, { y: 81.5, text: '1.30450' }, { y: 118.5, text: '1.28470' }]}
							priceY={16}
							price="1.33910"
						>
							<path d={barPath(gbpusdTrend, { 130: [310, 350], 161: [182, 258], 165: [172, 218], 173: [157, 190] })} fill="none" stroke="#00a000" />
							<path d={linePath(gbpusdAverage)} fill="none" stroke="#b40000" />
						</Chart>
					</ChartWindow>
					<ChartWindow title="USDCHF,H4">
						<Chart
							label="USDCHF,H4"
							summary="USDCHF,H4  0.84224 0.84375 0.84152 0.84363"
							dates={augustDates}
							rows={[{ y: 35.5, text: '0.86190' }, { y: 72.5, text: '0.84315' }]}
							priceY={76}
							price="0.84363"
							indicator={{
								text: 'MACD(12,26,9) -0.001165 -0.000327',
								levels: [],
								scale: [{ y: 99, text: '0.002155' }, { y: 109, text: '0.00' }, { y: 133, text: '-0.004052' }],
							}}
						>
							<path d={barPath(usdchfTrend, { 9: [160, 200], 112: [262, 350], 162: [292, 340], 164: [258, 290] })} fill="none" stroke="#00a000" />
							<path d="M2 109.500H440" stroke="#66727e" strokeDasharray="2 2" />
							<path
								d={Array.from({ length: 189 }, (_, k) => 8 + k * 6.875).map((x) => `M${round(px(x))} 109.5V${round(py(valueAt(macdHistogram, x)))}`).join('')}
								stroke="#8c8c8c"
							/>
							<path d={linePath(macdSignal)} fill="none" stroke="#c80000" strokeDasharray="2 1.5" />
						</Chart>
					</ChartWindow>
					<ChartWindow title="USDJPY,H4">
						<Chart
							label="USDJPY,H4"
							summary="USDJPY,H4  143.255 143.748 143.180 143.671"
							dates={septemberDates}
							rows={[{ y: 35.5, text: '' }, { y: 72.5, text: '140.890' }]}
							priceY={36}
							price="143.671"
							indicator={{
								text: 'CCI(14) -37.7647',
								levels: [110.5, 118.5, 126.5],
								scale: [{ y: 99, text: '287.0908' }, { y: 110, text: '100' }, { y: 118, text: '0.00' }, { y: 127, text: '-100' }, { y: 133, text: '-239.3952' }],
							}}
						>
							<Candles data={usdjpyCandles} />
							<path d={linePath(cciLine)} fill="none" stroke="#188080" />
						</Chart>
					</ChartWindow>
				</div>
			</div>
			<div className="flex h-[17px] items-center pl-1 text-[11px] text-[#808080]">
				<button type="button" className="h-full border border-t-0 border-[#444] bg-white px-2 leading-4 text-black">EURUSD,H4</button>
				{['USDCHF,H4', 'GBPUSD,H4', 'USDJPY,H4'].map((tab) => (
					<button key={tab} type="button" className="border-r border-[#999] px-2 leading-3">{tab}</button>
				))}
				<div className="ml-auto flex gap-2.5 pr-1.5">
					<button type="button" aria-label="Previous" className="border-y-3 border-r-3 border-y-transparent border-r-[#888]" />
					<button type="button" aria-label="Next" className="border-y-3 border-l-3 border-y-transparent border-l-[#888]" />
				</div>
			</div>
		</main>
	);
}

export default function App() {
	return (
		<div className="flex min-h-screen flex-col overflow-hidden bg-[#f0f0f0] font-['Noto_Sans','Noto_Sans_CJK_SC',sans-serif] text-[#1b1b1b]">
			<Toolbars />
			<div className="flex border-b border-[#c4c4c4]">
				<aside className="flex w-[107px] shrink-0 flex-col pt-px pr-[3px] pb-[3px] pl-1">
					<MarketWatch />
					<Navigator />
				</aside>
				<Workspace />
			</div>
			<Terminal />
		</div>
	);
}
